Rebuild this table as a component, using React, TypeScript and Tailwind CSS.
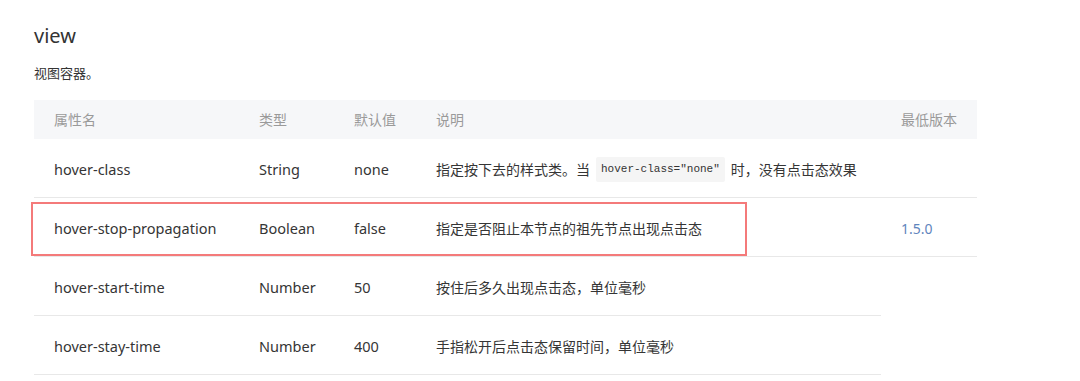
import React from "react";

type Row = {
  name: string;
  type: string;
  def: string;
  desc: React.ReactNode;
  since?: string;
  hasSince: boolean;
  marked?: boolean;
};

const rows: Row[] = [
  {
    name: "hover-class",
    type: "String",
    def: "none",
    desc: (
      <>
        指定按下去的样式类。当
        <code className="mx-[6px] rounded-[2px] bg-[#f5f5f5] px-[5px] py-[4px] font-['Liberation_Mono',monospace] text-[11px] text-[#333]">
          hover-class="none"
        </code>
        时，没有点击态效果
      </>
    ),
    hasSince: true,
  },
  {
    name: "hover-stop-propagation",
    type: "Boolean",
    def: "false",
    desc: "指定是否阻止本节点的祖先节点出现点击态",
    since: "1.5.0",
    hasSince: true,
    marked: true,
  },
  {
    name: "hover-start-time",
    type: "Number",
    def: "50",
    desc: "按住后多久出现点击态，单位毫秒",
    hasSince: false,
  },
  {
    name: "hover-stay-time",
    type: "Number",
    def: "400",
    desc: "手指松开后点击态保留时间，单位毫秒",
    hasSince: false,
  },
];

const cell = "flex h-[59px] items-center border-b border-[#e8e8e8] pl-5 pt-[3px]";

export default function App() {
  return (
    <div className="h-[381px] w-[1080px] overflow-hidden bg-white pl-[34px] pt-[24px] font-['Noto_Sans','Noto_Sans_CJK_SC',sans-serif] text-[#353535]">
      <h2 className="text-[20px] leading-[24px] text-[#333]">view</h2>
      <p className="mt-[16px] text-[13px] leading-[18px] text-[#333]">视图容器。</p>

      <div className="relative mt-[18px] w-[943px] text-[14.5px]">
        {/* header */}
        <div className="flex h-[39px] items-center bg-[#f6f7f9] text-[14px] text-[#9a9a9a]">
          <div className="w-[205px] pl-5">属性名</div>
          <div className="w-[95px] pl-5">类型</div>
          <div className="w-[82px] pl-5">默认值</div>
          <div className="w-[465px] pl-5">说明</div>
          <div className="w-[96px] pl-5">最低版本</div>
        </div>

        {rows.map((r) => (
          <div key={r.name} className="relative flex">
            <div className={`${cell} w-[205px]`}>{r.name}</div>
            <div className={`${cell} w-[95px]`}>{r.type}</div>
            <div className={`${cell} w-[82px]`}>{r.def}</div>
            <div className={`${cell} w-[465px] text-[14px]`}>{r.desc}</div>
            {r.hasSince && (
              <div className={`${cell} w-[96px] text-[14px] text-[#5f85bd]`}>{r.since}</div>
            )}
            {r.marked && (
              <div className="pointer-events-none absolute left-[-3px] top-[4px] h-[54px] w-[716px] border-2 border-[#f47a7a]" />
            )}
          </div>
        ))}
      </div>
    </div>
  );
}
